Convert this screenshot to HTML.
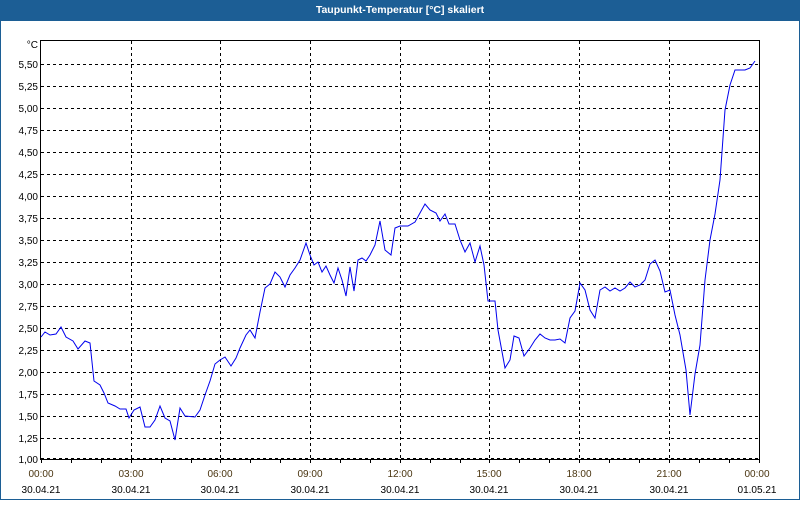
<!DOCTYPE html><html><head><style>
body{margin:0;width:800px;height:500px;overflow:hidden;background:#fff;font-family:"Liberation Sans",sans-serif}
</style></head><body>
<svg width="800" height="500" xmlns="http://www.w3.org/2000/svg" font-family="Liberation Sans, sans-serif" font-size="10" shape-rendering="crispEdges">
<rect x="0" y="0" width="800" height="500" fill="#1c5e95"/>
<rect x="1" y="21" width="798" height="478" fill="#fff"/>
<text x="400" y="13" fill="#fff" font-weight="bold" text-anchor="middle" font-size="10.5">Taupunkt-Temperatur [°C] skaliert</text>
<g stroke="#000" stroke-dasharray="3,3" stroke-width="1">
<path d="M131.5 41V459M220.5 41V459M310.5 41V459M400.5 41V459M489.5 41V459M579.5 41V459M669.5 41V459"/>
<path d="M41 64.5H760M41 86.5H760M41 108.5H760M41 130.5H760M41 152.5H760M41 174.5H760M41 196.5H760M41 218.5H760M41 240.5H760M41 262.5H760M41 284.5H760M41 306.5H760M41 328.5H760M41 350.5H760M41 372.5H760M41 394.5H760M41 416.5H760M41 438.5H760M41 458.5H760"/>
</g>
<rect x="40.5" y="40.5" width="719" height="419" fill="none" stroke="#000"/>
<g stroke="#000"><path d="M41.5 460v3M71.5 460v3M101.5 460v3M131.5 460v3M161.5 460v3M191.5 460v3M220.5 460v3M250.5 460v3M280.5 460v3M310.5 460v3M340.5 460v3M370.5 460v3M400.5 460v3M430.5 460v3M460.5 460v3M489.5 460v3M519.5 460v3M549.5 460v3M579.5 460v3M609.5 460v3M639.5 460v3M669.5 460v3M699.5 460v3M729.5 460v3M759.5 460v3"/></g>
<polyline fill="none" stroke="#0000ee" stroke-width="1" shape-rendering="auto" points="41,337 45,332 50,335 56,334 61,327 66,337 73,341 78,349 85,341 90,343 94,381 100,385 104,393 108,403 115,406 120,409 126,409 129,418 134,410 140,407 145,427 150,427 155,420 160,406 165,418 170,421 175,440 180,408 185,416 195,417 200,410 205,395 210,381 215,364 220,360 225,357 231,366 236,358 240,348 246,335 250,330 255,338 260,312 265,288 270,284 275,272 280,277 285,287 290,275 295,268 300,260 306,243 310,255 314,265 318,262 322,272 326,266 330,275 334,283 338,268 342,280 346,296 350,267 354,291 358,260 362,258 366,261 370,255 375,245 380,221 385,250 391,255 395,228 400,226 408,226 415,222 420,213 425,204 430,210 436,213 440,221 445,214 449,224 455,224 460,240 465,252 470,243 475,262 480,246 484,265 488,301 495,301 498,330 505,368 510,360 514,336 519,338 524,356 530,348 535,340 540,334 545,338 550,340 555,340 560,339 565,343 570,318 575,311 580,283 585,290 590,310 595,318 600,290 605,287 610,291 615,288 620,291 625,288 630,282 635,287 640,285 645,280 650,264 655,260 660,271 665,292 670,290 675,315 680,335 686,370 690,415 695,374 700,345 705,280 710,240 715,214 720,180 725,110 730,85 735,70 740,70 745,70 750,68 755,61"/>
<g text-anchor="end" fill="#000">
<text x="38" y="48">°C</text>
<text x="38" y="68">5,50</text><text x="38" y="90">5,25</text><text x="38" y="112">5,00</text><text x="38" y="134">4,75</text><text x="38" y="156">4,50</text><text x="38" y="178">4,25</text><text x="38" y="200">4,00</text><text x="38" y="222">3,75</text><text x="38" y="244">3,50</text><text x="38" y="266">3,25</text><text x="38" y="288">3,00</text><text x="38" y="310">2,75</text><text x="38" y="332">2,50</text><text x="38" y="354">2,25</text><text x="38" y="376">2,00</text><text x="38" y="398">1,75</text><text x="38" y="420">1,50</text><text x="38" y="442">1,25</text><text x="38" y="463">1,00</text>
</g>
<g text-anchor="middle">
<g fill="#4a3510">
<text x="41" y="477">00:00</text><text x="131" y="477">03:00</text><text x="220" y="477">06:00</text><text x="310" y="477">09:00</text><text x="400" y="477">12:00</text><text x="489" y="477">15:00</text><text x="579" y="477">18:00</text><text x="669" y="477">21:00</text><text x="757" y="477">00:00</text>
</g>
<g fill="#000">
<text x="41" y="493">30.04.21</text><text x="131" y="493">30.04.21</text><text x="220" y="493">30.04.21</text><text x="310" y="493">30.04.21</text><text x="400" y="493">30.04.21</text><text x="489" y="493">30.04.21</text><text x="579" y="493">30.04.21</text><text x="669" y="493">30.04.21</text><text x="757" y="493">01.05.21</text>
</g></g>
</svg>
</body></html>
